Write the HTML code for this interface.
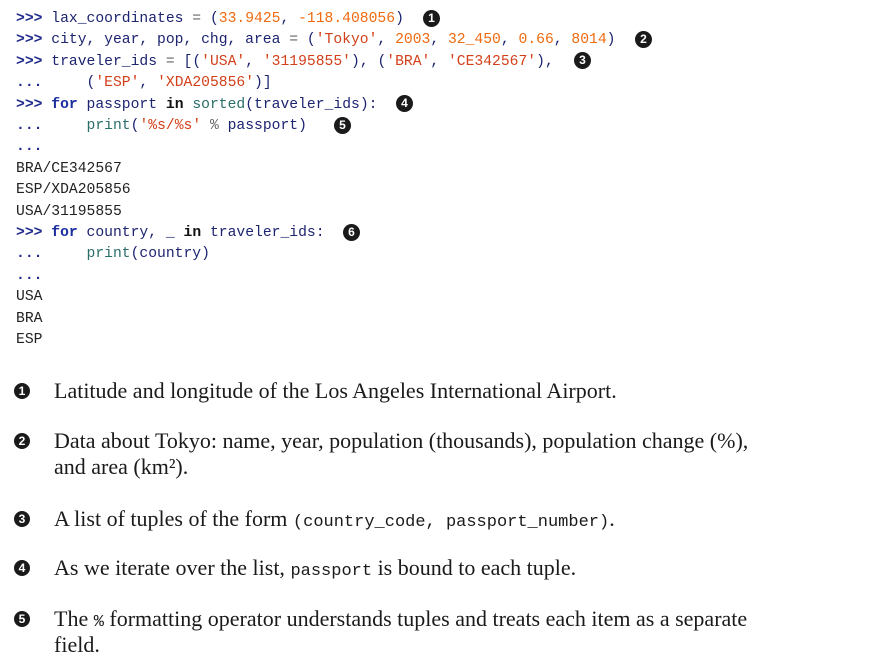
<!DOCTYPE html>
<html><head><meta charset="utf-8"><style>
body{margin:0;width:869px;height:661px;background:#fff;position:relative;overflow:hidden}
pre{position:absolute;left:16px;top:9px;margin:0;font:14.7px/21.4px "Liberation Mono",monospace;color:#1d2470}
.p{color:#1f2a8c;font-weight:bold}
.k{color:#1a2ea0;font-weight:bold}
.s{color:#d2401a}
.n{color:#f06a10}
.f{color:#2a6e6a}
.o{color:#666}
.out{color:#222}
.c{position:absolute;width:17px;height:17px;border-radius:50%;background:#1a1a1a;color:#fff;font:bold 12px/17px "Liberation Sans",sans-serif;text-align:center}
.t{position:absolute;left:54px;font:22px/26px "Liberation Serif",serif;color:#1a1a1a;width:800px}
.t code{font:17px "Liberation Mono",monospace}
</style></head><body>
<pre><span class="p">&gt;&gt;&gt;</span> lax_coordinates <span class="o">=</span> (<span class="n">33.9425</span>, <span class="n">-118.408056</span>)
<span class="p">&gt;&gt;&gt;</span> city, year, pop, chg, area <span class="o">=</span> (<span class="s">'Tokyo'</span>, <span class="n">2003</span>, <span class="n">32_450</span>, <span class="n">0.66</span>, <span class="n">8014</span>)
<span class="p">&gt;&gt;&gt;</span> traveler_ids <span class="o">=</span> [(<span class="s">'USA'</span>, <span class="s">'31195855'</span>), (<span class="s">'BRA'</span>, <span class="s">'CE342567'</span>),
<span class="p">...</span>     (<span class="s">'ESP'</span>, <span class="s">'XDA205856'</span>)]
<span class="p">&gt;&gt;&gt;</span> <span class="k">for</span> passport <span class="k" style="color:#111">in</span> <span class="f">sorted</span>(traveler_ids):
<span class="p">...</span>     <span class="f">print</span>(<span class="s">'%s/%s'</span> <span class="o">%</span> passport)
<span class="p">...</span>
<span class="out">BRA/CE342567</span>
<span class="out">ESP/XDA205856</span>
<span class="out">USA/31195855</span>
<span class="p">&gt;&gt;&gt;</span> <span class="k">for</span> country, _ <span class="k" style="color:#111">in</span> traveler_ids:
<span class="p">...</span>     <span class="f">print</span>(country)
<span class="p">...</span>
<span class="out">USA</span>
<span class="out">BRA</span>
<span class="out">ESP</span></pre>
<div class="c" style="left:423px;top:10px">1</div>
<div class="c" style="left:635px;top:31px">2</div>
<div class="c" style="left:574px;top:52px">3</div>
<div class="c" style="left:396px;top:95px">4</div>
<div class="c" style="left:334px;top:117px">5</div>
<div class="c" style="left:343px;top:224px">6</div>

<div class="c" style="left:14px;top:383px;width:16px;height:16px;line-height:16px">1</div>
<div class="t" style="top:378px">Latitude and longitude of the Los Angeles International Airport.</div>
<div class="c" style="left:14px;top:433px;width:16px;height:16px;line-height:16px">2</div>
<div class="t" style="top:428px">Data about Tokyo: name, year, population (thousands), population change (%),<br>and area (km²).</div>
<div class="c" style="left:14px;top:511px;width:16px;height:16px;line-height:16px">3</div>
<div class="t" style="top:506px">A list of tuples of the form <code>(country_code, passport_number)</code>.</div>
<div class="c" style="left:14px;top:560px;width:16px;height:16px;line-height:16px">4</div>
<div class="t" style="top:555px">As we iterate over the list, <code>passport</code> is bound to each tuple.</div>
<div class="c" style="left:14px;top:611px;width:16px;height:16px;line-height:16px">5</div>
<div class="t" style="top:606px">The <code>%</code> formatting operator understands tuples and treats each item as a separate<br>field.</div>
</body></html>
